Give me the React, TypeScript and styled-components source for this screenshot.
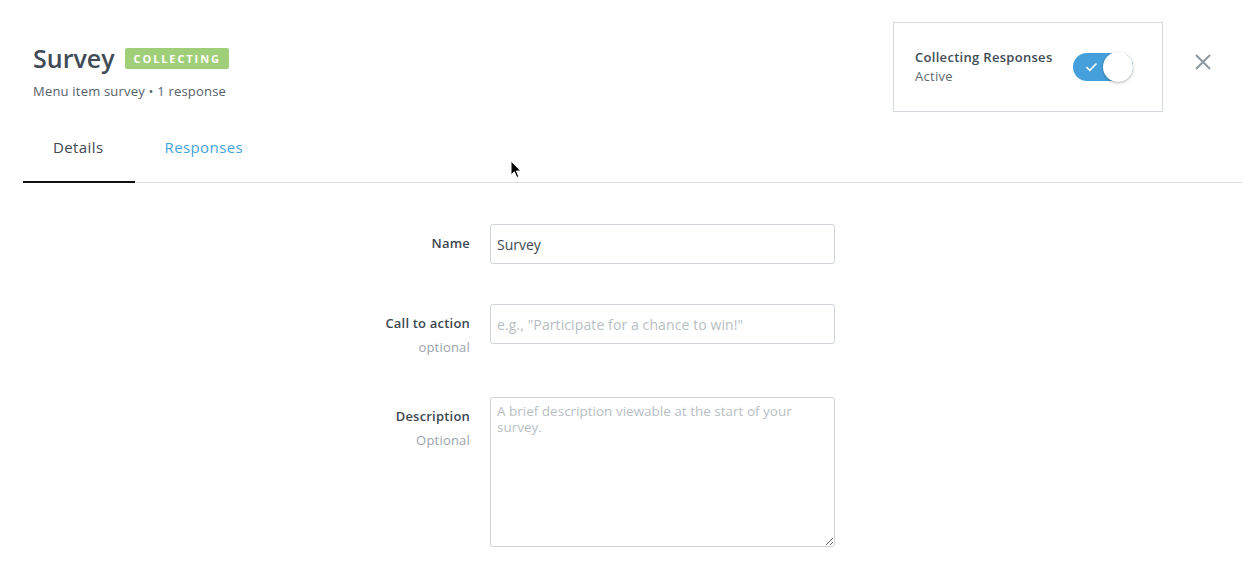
import React, { useState } from "react";
import styled, { createGlobalStyle } from "styled-components";

const GlobalStyle = createGlobalStyle`
  body {
    margin: 0;
    background: #fff;
    font-family: "Open Sans", Lato, "Liberation Sans", sans-serif;
    color: #3f4852;
  }
`;

export default function App() {
  const [collecting, setCollecting] = useState(true);
  const [name, setName] = useState("Survey");

  return (
    <>
      <GlobalStyle />
      <Page>
        <Header>
          <TitleBlock>
            <TitleRow>
              <Title>Survey</Title>
              <Badge>Collecting</Badge>
            </TitleRow>
            <Subtitle>Menu item survey • 1 response</Subtitle>
          </TitleBlock>

          <HeaderActions>
            <StatusCard>
              <StatusText>
                <StatusTitle>Collecting Responses</StatusTitle>
                <StatusValue>{collecting ? "Active" : "Inactive"}</StatusValue>
              </StatusText>
              <Toggle $on={collecting} onClick={() => setCollecting(!collecting)}>
                <svg width="13" height="10" viewBox="0 0 13 10">
                  <path d="M1.5 5.2 L4.8 8.3 L11.5 1.5" fill="none" stroke="#fff" strokeWidth="1.6" />
                </svg>
                <Knob $on={collecting} />
              </Toggle>
            </StatusCard>
            <CloseButton aria-label="Close">
              <svg width="16" height="16" viewBox="0 0 16 16">
                <path d="M1 1 L15 15 M15 1 L1 15" stroke="#8d979f" strokeWidth="2" />
              </svg>
            </CloseButton>
          </HeaderActions>
        </Header>

        <Tabs>
          <Tab $active>Details</Tab>
          <Tab>Responses</Tab>
        </Tabs>

        <Form>
          <Label>Name</Label>
          <Input value={name} onChange={(e) => setName(e.target.value)} />

          <Label>
            Call to action
            <Hint>optional</Hint>
          </Label>
          <Input placeholder={'e.g., "Participate for a chance to win!"'} />

          <Label>
            Description
            <Hint>Optional</Hint>
          </Label>
          <TextArea placeholder="A brief description viewable at the start of your survey." />
        </Form>

        <Cursor width="12" height="19" viewBox="0 0 12 19">
          <path d="M1 1 L1 15 L4.3 11.8 L6.8 17.5 L8.8 16.6 L6.4 11 L10.8 11 Z" fill="#000" stroke="#fff" strokeWidth="1" />
        </Cursor>
      </Page>
    </>
  );
}

const Page = styled.div`
  position: relative;
  padding: 22px 15px 0 23px;
`;

const Header = styled.div`
  display: flex;
  justify-content: space-between;
  align-items: flex-start;
`;

const TitleBlock = styled.div`
  padding: 21px 0 0 10px;
`;

const TitleRow = styled.div`
  display: flex;
  align-items: center;
  gap: 10px;
  height: 30px;
`;

const Title = styled.h1`
  margin: 0;
  font-size: 25px;
  line-height: 30px;
  font-weight: 600;
  color: #414b56;
`;

const Badge = styled.span`
  display: inline-flex;
  align-items: center;
  height: 21px;
  padding: 0 8px 0 9px;
  margin-top: 1px;
  background: #a0cf79;
  border-radius: 2px;
  color: #fff;
  font-size: 11px;
  font-weight: 700;
  letter-spacing: 1.9px;
  text-transform: uppercase;
`;

const Subtitle = styled.div`
  margin-top: 9px;
  font-size: 13px;
  line-height: 18px;
  letter-spacing: 0.2px;
  color: #56616b;
`;

const HeaderActions = styled.div`
  display: flex;
  align-items: flex-start;
  gap: 32px;
  margin-right: 31px;
`;

const StatusCard = styled.div`
  box-sizing: border-box;
  width: 270px;
  height: 90px;
  border: 1px solid #d3d9de;
  display: flex;
  align-items: center;
  justify-content: space-between;
  padding: 0 29px 0 21px;
`;

const StatusText = styled.div`
  display: flex;
  flex-direction: column;
  line-height: 19px;
  font-size: 13px;
  letter-spacing: 0.3px;
`;

const StatusTitle = styled.span`
  font-weight: 600;
  color: #414b56;
`;

const StatusValue = styled.span`
  color: #5f6a74;
`;

const Toggle = styled.div<{ $on: boolean }>`
  position: relative;
  width: 60px;
  height: 28px;
  border-radius: 14px;
  background: ${(p) => (p.$on ? "#459fdb" : "#c9d0d6")};
  display: flex;
  align-items: center;
  padding-left: 12px;
  box-sizing: border-box;
  cursor: pointer;
`;

const Knob = styled.span<{ $on: boolean }>`
  position: absolute;
  top: -1px;
  left: ${(p) => (p.$on ? "30px" : "0")};
  width: 30px;
  height: 30px;
  border-radius: 50%;
  background: #fff;
  box-shadow: 0 1px 3px rgba(0, 0, 0, 0.3);
`;

const CloseButton = styled.button`
  margin-top: 32px;
  padding: 0;
  border: none;
  background: none;
  width: 16px;
  height: 16px;
  cursor: pointer;
`;

const Tabs = styled.div`
  display: flex;
  border-bottom: 1px solid #dcdfe2;
`;

const Tab = styled.div<{ $active?: boolean }>`
  padding: 25px 30px 24px 30px;
  font-size: 15px;
  line-height: 20px;
  letter-spacing: 0.4px;
  color: ${(p) => (p.$active ? "#3f4852" : "#45a3dd")};
  border-bottom: 2px solid ${(p) => (p.$active ? "#111" : "transparent")};
  margin-bottom: -1px;
  cursor: pointer;

  &:first-child {
    padding-right: 31px;
  }
`;

const Form = styled.div`
  display: grid;
  grid-template-columns: 447px 345px;
  column-gap: 20px;
  row-gap: 40px;
  padding-top: 41px;
`;

const Label = styled.label`
  display: flex;
  flex-direction: column;
  align-items: flex-end;
  padding-top: 7px;
  font-size: 13px;
  line-height: 24px;
  letter-spacing: 0.2px;
  font-weight: 600;
  color: #3d4752;
`;

const Hint = styled.span`
  margin-bottom: -2px;
  font-weight: 400;
  color: #9aa3ab;
`;

const Input = styled.input`
  box-sizing: border-box;
  height: 40px;
  width: 100%;
  padding: 0 6px;
  border: 1px solid #cdd3d8;
  border-radius: 3px;
  font-family: inherit;
  font-size: 14px;
  color: #3f4852;
  outline: none;

  &::placeholder {
    color: #b8bec4;
    letter-spacing: 0.1px;
  }
`;

const TextArea = styled.textarea`
  box-sizing: border-box;
  height: 150px;
  width: 100%;
  padding: 5px 6px;
  border: 1px solid #cdd3d8;
  border-radius: 3px;
  font-family: inherit;
  font-size: 13.5px;
  line-height: 16px;
  color: #3f4852;
  outline: none;
  resize: vertical;

  &::placeholder {
    color: #b8bec4;
  }
`;

const Cursor = styled.svg`
  position: absolute;
  left: 510px;
  top: 160px;
  pointer-events: none;
`;
